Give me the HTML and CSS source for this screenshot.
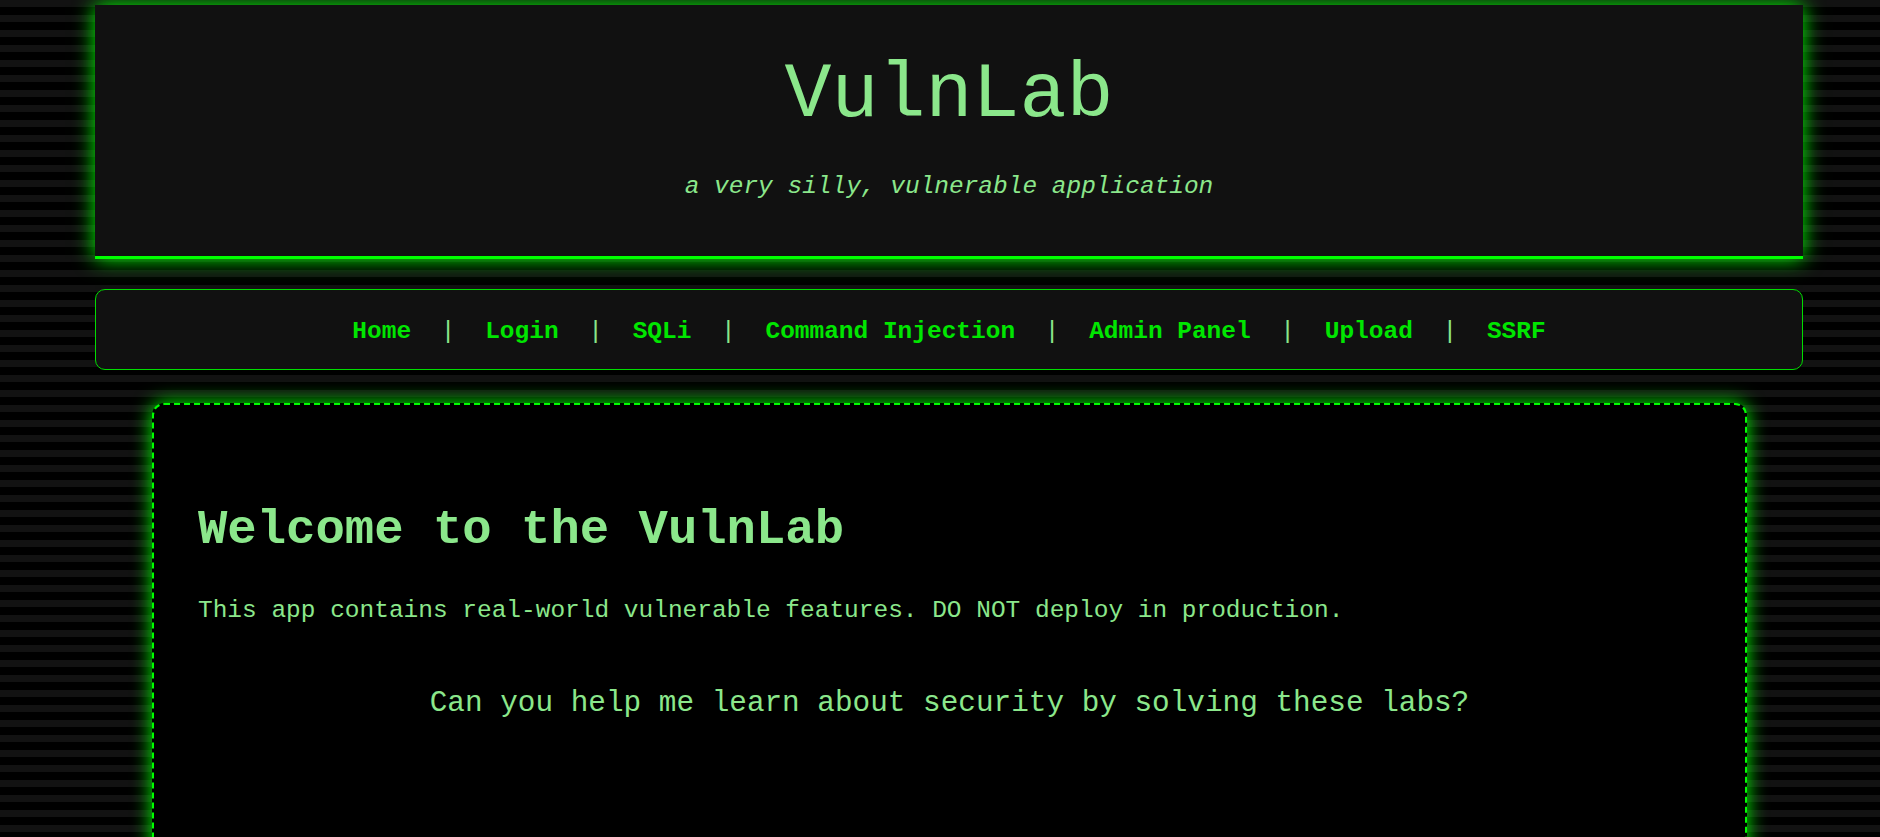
FILE: index.html
```html
<!DOCTYPE html>
<html lang="en">
<head>
<meta charset="utf-8">
<title>VulnLab</title>
<link rel="stylesheet" href="styles.css">
</head>
<body>
  <header class="site-header">
    <h1 class="site-title">VulnLab</h1>
    <p class="site-tagline">a very silly, vulnerable application</p>
  </header>

  <nav class="site-nav"><a href="#">Home</a><span class="sep"> | </span><a href="#">Login</a><span class="sep"> | </span><a href="#">SQLi</a><span class="sep"> | </span><a href="#">Command Injection</a><span class="sep"> | </span><a href="#">Admin Panel</a><span class="sep"> | </span><a href="#">Upload</a><span class="sep"> | </span><a href="#">SSRF</a></nav>

  <main class="card">
    <h2 class="card-title">Welcome to the VulnLab</h2>
    <p class="card-text">This app contains real-world vulnerable features. DO NOT deploy in production.</p>
    <p class="card-question">Can you help me learn about security by solving these labs?</p>
  </main>
</body>
</html>
```

FILE: styles.css
```css
html {
  background: #000;
}

body {
  margin: 0;
  padding: 5px 77px 0 95px;
  min-height: 837px;
  box-sizing: border-box;
  font-family: "Liberation Mono", "DejaVu Sans Mono", monospace;
  font-size: 24.48px;
  color: #8be78b;
  background: repeating-linear-gradient(to bottom, #121212 0, #121212 7.5px, #000 7.5px, #000 15px);
}

.site-header {
  background: #111;
  border-bottom: 3px solid #00ff00;
  box-shadow: 0 0 20px #00ff00;
  padding: 52px 20px 57px;
  text-align: center;
}

.site-title {
  margin: 0;
  font-size: 78.3px;
  line-height: 78px;
  font-weight: normal;
  color: #8be78b;
}

.site-tagline {
  margin: 40px 0 0;
  font-size: 24.48px;
  line-height: 24px;
  font-style: italic;
  color: #8be78b;
}

.site-nav {
  margin-top: 30px;
  background: #111;
  border: 1px solid #00dd00;
  border-radius: 10px;
  padding: 28px 20px 24px;
  text-align: center;
  font-size: 24.48px;
  line-height: normal;
  font-weight: bold;
}

.site-nav a {
  color: #00e600;
  text-decoration: none;
  margin: 0 15px;
}

.site-nav .sep {
  color: #8be78b;
  font-weight: normal;
}

.card {
  margin: 33px 56px 0 57px;
  background: #000;
  border: 2px dashed #00ff00;
  border-radius: 12px;
  box-shadow: 0 0 20px #00ff00;
  padding: 97px 44px 260px;
}

.card-title {
  margin: 0;
  font-size: 48.95px;
  line-height: normal;
  font-weight: bold;
  color: #8be78b;
}

.card-text {
  margin: 39px 0 0;
  font-size: 24.48px;
  line-height: normal;
  color: #8be78b;
}

.card-question {
  margin: 63px 0 0;
  font-size: 29.37px;
  line-height: normal;
  text-align: center;
  color: #8be78b;
}
```
